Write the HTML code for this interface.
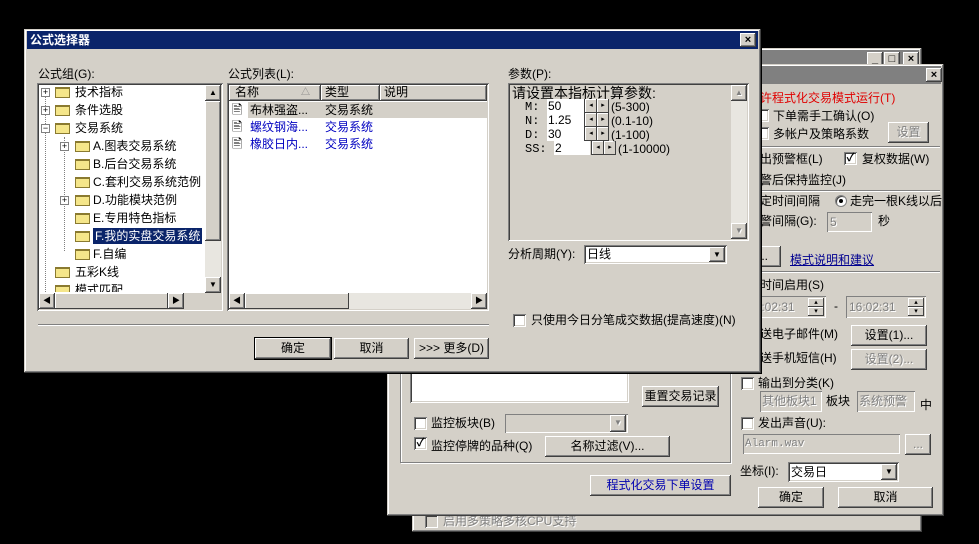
<!DOCTYPE html>
<html><head><meta charset="utf-8"><style>
*{margin:0;padding:0;box-sizing:border-box}
body{width:979px;height:544px;background:#000;position:relative;overflow:hidden;font-family:"Liberation Sans","Noto Sans CJK SC","WenQuanYi Zen Hei",sans-serif;font-size:12px;color:#000}
.a{position:absolute}
.t{position:absolute;white-space:nowrap;font-size:12px;line-height:14px}
.win{position:absolute;background:#d4d0c8;box-shadow:inset -1px -1px #404040,inset 1px 1px #d4d0c8,inset -2px -2px #808080,inset 2px 2px #fff}
.btn{position:absolute;background:#d4d0c8;box-shadow:inset -1px -1px #404040,inset 1px 1px #fff,inset -2px -2px #808080,inset 2px 2px #d4d0c8;text-align:center;font-size:12px;white-space:nowrap}
.sk{position:absolute;background:#fff;box-shadow:inset 1px 1px #808080,inset -1px -1px #fff,inset 2px 2px #404040,inset -2px -2px #d4d0c8}
.skg{position:absolute;background:#d4d0c8;box-shadow:inset 1px 1px #808080,inset -1px -1px #fff}
.cb{position:absolute;width:13px;height:13px;background:#fff;box-shadow:inset 1px 1px #808080,inset -1px -1px #fff,inset 2px 2px #404040,inset -2px -2px #d4d0c8;font-size:11px;line-height:13px;text-align:center;font-weight:bold}
.sep{position:absolute;height:2px;border-top:1px solid #808080;border-bottom:1px solid #fff}
.tb{position:absolute;height:18px;background:#808080;color:#d4d0c8;font-weight:bold;font-size:12px;line-height:18px;padding-left:3px}
.cap{position:absolute;width:16px;height:14px;background:#d4d0c8;box-shadow:inset -1px -1px #404040,inset 1px 1px #fff,inset -2px -2px #808080;font-size:11px;line-height:14px;text-align:center;font-weight:bold}
.fold{position:absolute;width:15px;height:11px;background:#f5e68a;border:1px solid #8a7a30;border-top-width:2px}
.pm{position:absolute;width:9px;height:9px;border:1px solid #808080;background:#fff;font-size:9px;line-height:7px;text-align:center}
.dis{color:#808080;text-shadow:1px 1px #fff}
.sb{position:absolute;background:#e8e6e0}
.sbb{position:absolute;width:16px;height:16px;background:#d4d0c8;box-shadow:inset -1px -1px #404040,inset 1px 1px #fff,inset -2px -2px #808080;font-size:8px;line-height:16px;text-align:center}
.spin{position:absolute;width:12px;height:14px;background:#d4d0c8;box-shadow:inset -1px -1px #404040,inset 1px 1px #fff;font-size:7px;line-height:14px;text-align:center}
</style></head><body>

<!-- back window -->
<div class="win" style="left:412px;top:48px;width:510px;height:484px"></div>
<div class="tb" style="left:415px;top:50px;width:504px"></div>
<div class="cap" style="left:867px;top:52px">_</div>
<div class="cap" style="left:884px;top:52px">□</div>
<div class="cap" style="left:903px;top:52px">×</div>
<div class="cb" style="left:425px;top:515px;background:#d4d0c8"></div>
<div class="t dis" style="left:443px;top:514px">启用多策略多核CPU支持</div>

<!-- middle window -->
<div class="win" style="left:387px;top:64px;width:557px;height:452px"></div>
<div class="tb" style="left:390px;top:66px;width:551px"></div>
<div class="cap" style="left:926px;top:68px">×</div>
<div class="t" style="left:748px;top:91px;color:#e00000">允许程式化交易模式运行(T)</div>
<div class="cb" style="left:756px;top:109px"></div>
<div class="t" style="left:773px;top:109px">下单需手工确认(O)</div>
<div class="cb" style="left:756px;top:127px"></div>
<div class="t" style="left:773px;top:127px">多帐户及策略系数</div>
<div class="btn dis" style="left:888px;top:122px;width:41px;height:21px;line-height:21px">设置</div>
<div class="sep" style="left:748px;top:146px;width:192px"></div>
<div class="t" style="left:748px;top:152px">弹出预警框(L)</div>
<div class="cb" style="left:844px;top:152px">✓</div>
<div class="t" style="left:862px;top:152px">复权数据(W)</div>
<div class="t" style="left:748px;top:173px">预警后保持监控(J)</div>
<div class="sep" style="left:748px;top:190px;width:192px"></div>
<div class="t" style="left:748px;top:194px">固定时间间隔</div>
<div class="a" style="left:835px;top:195px;width:12px;height:12px;border-radius:6px;background:#fff;border:1px solid #808080;box-shadow:inset 1px 1px #404040"><div class="a" style="left:3px;top:3px;width:4px;height:4px;background:#000;border-radius:2px"></div></div>
<div class="t" style="left:850px;top:194px">走完一根K线以后</div>
<div class="t" style="left:748px;top:214px">预警间隔(G):</div>
<div class="skg" style="left:827px;top:212px;width:45px;height:20px"><span class="t dis" style="left:3px;top:3px">5</span></div>
<div class="t" style="left:878px;top:214px">秒</div>
<div class="btn" style="left:745px;top:246px;width:36px;height:21px;line-height:21px">...</div>
<div class="t" style="left:790px;top:253px;color:#000090;text-decoration:underline">模式说明和建议</div>
<div class="sep" style="left:748px;top:271px;width:192px"></div>
<div class="t" style="left:748px;top:278px">定时间启用(S)</div>
<div class="skg" style="left:740px;top:296px;width:86px;height:22px"><span class="t dis" style="left:8px;top:4px">16:02:31</span></div>
<div class="spin" style="left:808px;top:298px;width:16px;height:9px;line-height:9px">▴</div><div class="spin" style="left:808px;top:307px;width:16px;height:9px;line-height:9px">▾</div>
<div class="t" style="left:834px;top:299px">-</div>
<div class="skg" style="left:846px;top:296px;width:80px;height:22px"><span class="t dis" style="left:3px;top:4px">16:02:31</span></div>
<div class="spin" style="left:908px;top:298px;width:16px;height:9px;line-height:9px">▴</div><div class="spin" style="left:908px;top:307px;width:16px;height:9px;line-height:9px">▾</div>
<div class="t" style="left:748px;top:327px">发送电子邮件(M)</div>
<div class="btn" style="left:851px;top:325px;width:76px;height:21px;line-height:21px">设置(1)...</div>
<div class="t" style="left:748px;top:351px">发送手机短信(H)</div>
<div class="btn dis" style="left:851px;top:349px;width:76px;height:21px;line-height:21px">设置(2)...</div>
<div class="cb" style="left:741px;top:377px"></div>
<div class="t" style="left:758px;top:376px">输出到分类(K)</div>
<div class="skg" style="left:760px;top:391px;width:62px;height:21px"><span class="t dis" style="left:2px;top:3px">其他板块1</span></div>
<div class="t" style="left:826px;top:394px">板块</div>
<div class="skg" style="left:857px;top:391px;width:58px;height:21px"><span class="t dis" style="left:2px;top:3px">系统预警</span></div>
<div class="t" style="left:920px;top:398px">中</div>
<div class="cb" style="left:741px;top:417px"></div>
<div class="t" style="left:758px;top:416px">发出声音(U):</div>
<div class="skg" style="left:743px;top:434px;width:157px;height:20px"><span class="t dis" style="left:2px;top:3px;font-size:11px;font-family:'Liberation Mono',monospace">Alarm.wav</span></div>
<div class="btn dis" style="left:905px;top:434px;width:26px;height:21px;line-height:21px">...</div>
<div class="t" style="left:740px;top:464px">坐标(I):</div>
<div class="sk" style="left:788px;top:462px;width:111px;height:20px"><span class="t" style="left:3px;top:3px">交易日</span><div class="sbb" style="left:93px;top:2px;height:16px">▼</div></div>
<div class="btn" style="left:758px;top:487px;width:66px;height:21px;line-height:21px">确定</div>
<div class="btn" style="left:838px;top:487px;width:95px;height:21px;line-height:21px">取消</div>

<!-- middle left part -->
<div class="a" style="left:400px;top:355px;width:331px;height:108px;border:1px solid #808080;box-shadow:1px 1px #fff,inset 1px 1px #fff"></div>
<div class="sk" style="left:410px;top:360px;width:219px;height:43px"></div>
<div class="btn" style="left:642px;top:355px;width:76px;height:19px"></div>
<div class="btn" style="left:642px;top:386px;width:77px;height:21px;line-height:21px">重置交易记录</div>
<div class="cb" style="left:414px;top:417px"></div>
<div class="t" style="left:431px;top:416px">监控板块(B)</div>
<div class="skg" style="left:505px;top:414px;width:123px;height:19px"><div class="sbb dis" style="left:105px;top:1px;height:17px">▼</div></div>
<div class="cb" style="left:414px;top:437px">✓</div>
<div class="t" style="left:431px;top:439px">监控停牌的品种(Q)</div>
<div class="btn" style="left:545px;top:436px;width:125px;height:21px;line-height:21px">名称过滤(V)...</div>
<div class="btn" style="left:590px;top:475px;width:141px;height:21px;line-height:21px;color:#0000b0">程式化交易下单设置</div>

<!-- front window -->
<div class="win" style="left:24px;top:29px;width:737px;height:344px;box-shadow:inset -1px -1px #404040,inset 1px 1px #d4d0c8,inset -2px -2px #808080,inset 2px 2px #fff,0 0 0 1px #000"></div>
<div class="tb" style="left:27px;top:31px;width:731px;background:#0a246a;color:#fff">公式选择器</div>
<div class="cap" style="left:740px;top:33px">×</div>

<div class="t" style="left:38px;top:67px">公式组(G):</div>
<div class="sk" style="left:37px;top:83px;width:186px;height:228px;overflow:hidden">
</div>
<div class="a" style="left:40px;top:86px;width:165px;height:206px;overflow:hidden">
 <div class="a" style="left:5px;top:6px;width:0;height:200px;border-left:1px dotted #808080"></div>
 <div class="a" style="left:24px;top:51px;width:0;height:114px;border-left:1px dotted #808080"></div>
 <div class="pm" style="left:1px;top:2px">+</div><div class="fold" style="left:15px;top:1px"></div><span class="t" style="left:35px;top:-1px">技术指标</span>
 <div class="pm" style="left:1px;top:20px">+</div><div class="fold" style="left:15px;top:19px"></div><span class="t" style="left:35px;top:17px">条件选股</span>
 <div class="pm" style="left:1px;top:38px">−</div><div class="fold" style="left:15px;top:37px"></div><span class="t" style="left:35px;top:35px">交易系统</span>
 <div class="pm" style="left:20px;top:56px">+</div><div class="fold" style="left:35px;top:55px"></div><span class="t" style="left:53px;top:53px">A.图表交易系统</span>
 <div class="fold" style="left:35px;top:73px"></div><span class="t" style="left:53px;top:71px">B.后台交易系统</span>
 <div class="fold" style="left:35px;top:91px"></div><span class="t" style="left:53px;top:89px">C.套利交易系统范例</span>
 <div class="pm" style="left:20px;top:110px">+</div><div class="fold" style="left:35px;top:109px"></div><span class="t" style="left:53px;top:107px">D.功能模块范例</span>
 <div class="fold" style="left:35px;top:127px"></div><span class="t" style="left:53px;top:125px">E.专用特色指标</span>
 <div class="fold" style="left:35px;top:145px"></div><span class="t" style="left:53px;top:142px;background:#0a246a;color:#fff;padding:1px 2px">F.我的实盘交易系统</span>
 <div class="fold" style="left:35px;top:163px"></div><span class="t" style="left:53px;top:161px">F.自编</span>
 <div class="fold" style="left:15px;top:181px"></div><span class="t" style="left:35px;top:179px">五彩K线</span>
 <div class="fold" style="left:15px;top:199px"></div><span class="t" style="left:35px;top:197px">模式匹配</span>
</div>
<div class="sb" style="left:205px;top:85px;width:16px;height:208px"></div>
<div class="sbb" style="left:205px;top:85px">▲</div>
<div class="a" style="left:205px;top:101px;width:16px;height:140px;background:#d4d0c8;box-shadow:inset -1px -1px #404040,inset 1px 1px #fff,inset -2px -2px #808080"></div>
<div class="sbb" style="left:205px;top:277px">▼</div>
<div class="a" style="left:39px;top:293px;width:182px;height:16px;background:#d4d0c8"></div>
<div class="sbb" style="left:39px;top:293px">◀</div>
<div class="a" style="left:55px;top:293px;width:113px;height:16px;background:#d4d0c8;box-shadow:inset -1px -1px #404040,inset 1px 1px #fff"></div>
<div class="sbb" style="left:168px;top:293px">▶</div>

<div class="t" style="left:228px;top:67px">公式列表(L):</div>
<div class="sk" style="left:227px;top:83px;width:262px;height:228px"></div>
<div class="a" style="left:229px;top:85px;width:258px;height:16px;background:#d4d0c8"></div>
<div class="btn" style="left:229px;top:85px;width:92px;height:16px;text-align:left;line-height:15px;padding-left:6px">名称<span style="position:absolute;left:72px;color:#808080;font-size:9px">△</span></div>
<div class="btn" style="left:321px;top:85px;width:59px;height:16px;text-align:left;line-height:15px;padding-left:4px">类型</div>
<div class="btn" style="left:380px;top:85px;width:107px;height:16px;text-align:left;line-height:15px;padding-left:4px">说明</div>
<div class="a" style="left:248px;top:102px;width:239px;height:16px;background:#d4d0c8"></div>
<span class="t" style="left:232px;top:103px;font-size:13px">🖹</span><span class="t" style="left:250px;top:103px">布林强盗...</span><span class="t" style="left:325px;top:103px">交易系统</span>
<span class="t" style="left:232px;top:120px;font-size:13px">🖹</span><span class="t" style="left:250px;top:120px;color:#0000c0">螺纹钢海...</span><span class="t" style="left:325px;top:120px;color:#0000c0">交易系统</span>
<span class="t" style="left:232px;top:137px;font-size:13px">🖹</span><span class="t" style="left:250px;top:137px;color:#0000c0">橡胶日内...</span><span class="t" style="left:325px;top:137px;color:#0000c0">交易系统</span>
<div class="sb" style="left:229px;top:293px;width:258px;height:16px"></div>
<div class="sbb" style="left:229px;top:293px">◀</div>
<div class="a" style="left:245px;top:293px;width:104px;height:16px;background:#d4d0c8;box-shadow:inset -1px -1px #404040,inset 1px 1px #fff"></div>
<div class="sbb" style="left:471px;top:293px">▶</div>

<div class="t" style="left:508px;top:67px">参数(P):</div>
<div class="a" style="left:508px;top:83px;width:241px;height:158px;background:#d4d0c8;box-shadow:inset 1px 1px #808080,inset -1px -1px #fff,inset 2px 2px #404040,inset -2px -2px #d4d0c8"></div>
<span class="t" style="left:512px;top:85px;font-size:14px;line-height:16px">请设置本指标计算参数:</span>
<span class="t" style="left:525px;top:100px;font-family:'Liberation Mono',monospace">M:</span>
<span class="t" style="left:525px;top:114px;font-family:'Liberation Mono',monospace">N:</span>
<span class="t" style="left:525px;top:128px;font-family:'Liberation Mono',monospace">D:</span>
<span class="t" style="left:525px;top:142px;font-family:'Liberation Mono',monospace">SS:</span>
<div class="a" style="left:547px;top:99px;width:37px;height:14px;background:#fff"><span class="t" style="left:1px;top:0">50</span></div>
<div class="a" style="left:547px;top:113px;width:37px;height:14px;background:#fff"><span class="t" style="left:1px;top:0">1.25</span></div>
<div class="a" style="left:547px;top:127px;width:37px;height:14px;background:#fff"><span class="t" style="left:1px;top:0">30</span></div>
<div class="a" style="left:554px;top:141px;width:36px;height:14px;background:#fff"><span class="t" style="left:1px;top:0">2</span></div>
<div class="a" style="left:584px;top:99px;width:25px;height:14px;background:#404040"></div><div class="spin" style="left:585px;top:99px">◂</div><div class="spin" style="left:597px;top:99px">▸</div>
<div class="a" style="left:584px;top:113px;width:25px;height:14px;background:#404040"></div><div class="spin" style="left:585px;top:113px">◂</div><div class="spin" style="left:597px;top:113px">▸</div>
<div class="a" style="left:584px;top:127px;width:25px;height:14px;background:#404040"></div><div class="spin" style="left:585px;top:127px">◂</div><div class="spin" style="left:597px;top:127px">▸</div>
<div class="a" style="left:591px;top:141px;width:25px;height:14px;background:#404040"></div><div class="spin" style="left:592px;top:141px">◂</div><div class="spin" style="left:604px;top:141px">▸</div>
<span class="t" style="left:611px;top:100px">(5-300)</span>
<span class="t" style="left:611px;top:114px">(0.1-10)</span>
<span class="t" style="left:611px;top:128px">(1-100)</span>
<span class="t" style="left:618px;top:142px">(1-10000)</span>
<div class="sb" style="left:731px;top:85px;width:16px;height:154px"></div>
<div class="sbb dis" style="left:731px;top:85px">▲</div>
<div class="sbb dis" style="left:731px;top:223px">▼</div>

<div class="t" style="left:508px;top:247px">分析周期(Y):</div>
<div class="sk" style="left:584px;top:245px;width:143px;height:19px"><span class="t" style="left:3px;top:2px">日线</span><div class="sbb" style="left:125px;top:2px;height:15px;line-height:15px">▼</div></div>

<div class="cb" style="left:513px;top:314px"></div>
<div class="t" style="left:531px;top:313px">只使用今日分笔成交数据(提高速度)(N)</div>
<div class="sep" style="left:38px;top:324px;width:451px"></div>
<div class="btn" style="left:255px;top:338px;width:76px;height:21px;line-height:21px;box-shadow:0 0 0 1px #000,inset -1px -1px #404040,inset 1px 1px #fff,inset -2px -2px #808080">确定</div>
<div class="btn" style="left:334px;top:338px;width:75px;height:21px;line-height:21px">取消</div>
<div class="btn" style="left:414px;top:338px;width:75px;height:21px;line-height:21px">&gt;&gt;&gt; 更多(D)</div>
</body></html>
